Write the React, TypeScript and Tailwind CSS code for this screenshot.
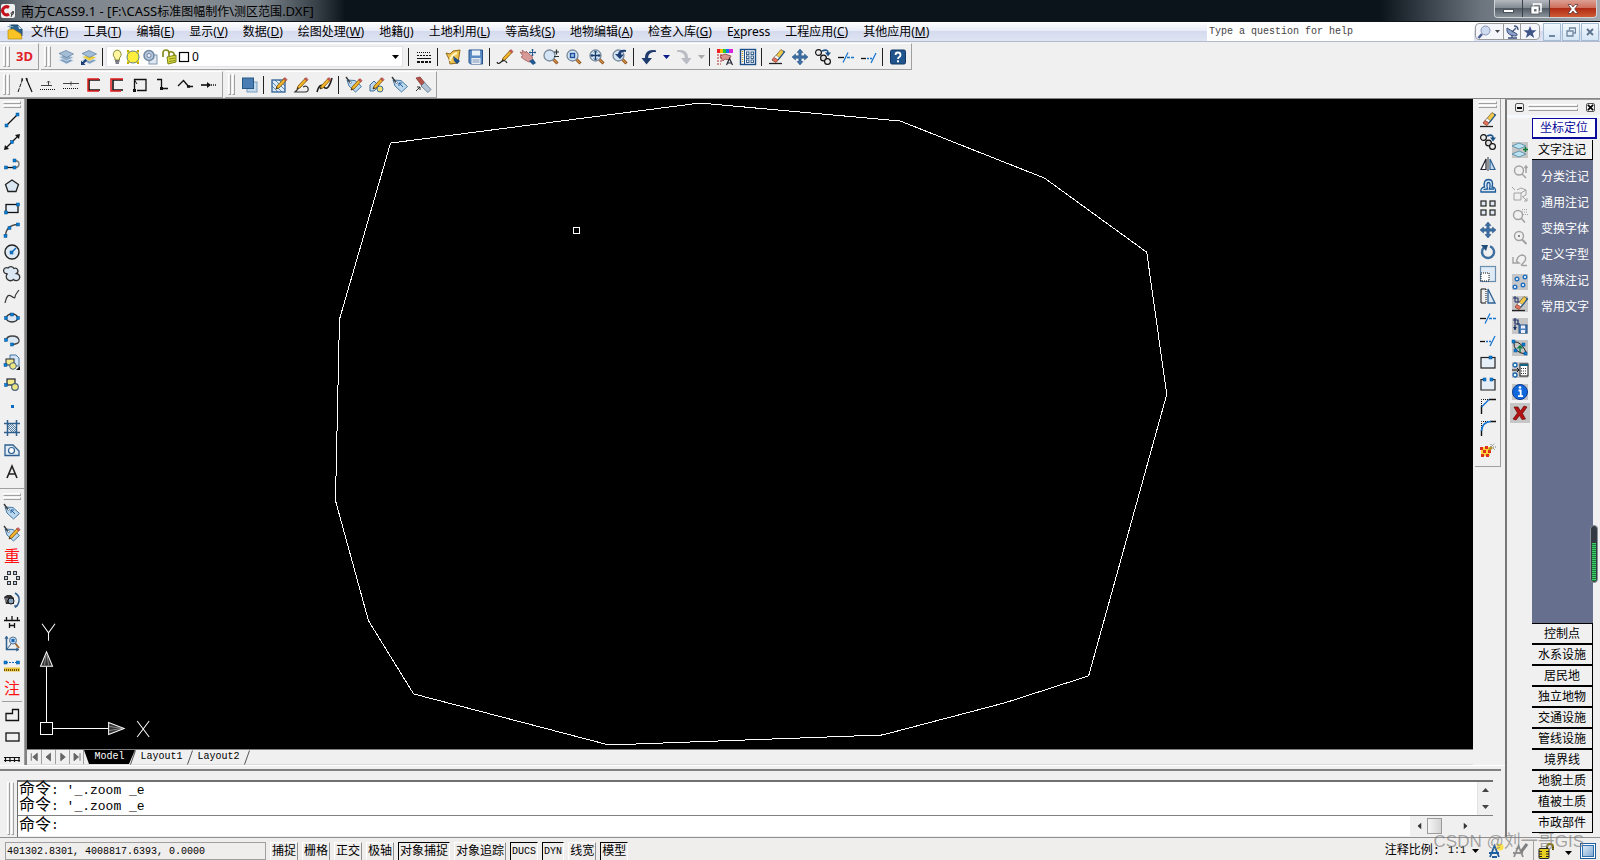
import React, { type ReactNode } from 'react';

const Dot = ({ x, y }: { x: number; y: number }) => (
  <rect x={x} y={y} width="3" height="3" fill="#0a7fd8" stroke="#06508c" strokeWidth="0.5" />
);

const K = '#111';
const N = '#2f5f8f';

const Pencil = ({ dx = 0, dy = 0 }: { dx?: number; dy?: number }) => (
  <g transform={`translate(${dx} ${dy})`}>
    <path d="M4 12 5 9 12 1.5 14 3.5 7 11z" fill="#f3b62a" stroke="#7a4d06" strokeWidth="0.8" />
    <path d="M11.5 2 13 .5 15 2.5 13.6 4z" fill="#cf5a5a" stroke="#8d2f2f" strokeWidth="0.5" />
    <path d="M4 12 4.700 10 6 11.200z" fill="#222" />
  </g>
);

const Lens = ({ children }: { children?: ReactNode }) => (
  <>
    <path d="M10 10 14.500 14.500" stroke="#8a4a17" strokeWidth="3" />
    <path d="M10 10 14 14" stroke="#d99445" strokeWidth="1.200" />
    <circle cx="6.500" cy="6.500" r="5.500" fill="#d5e4f4" stroke="#76889a" strokeWidth="1.300" />
    {children}
  </>
);

const Tag = () => (
  <>
    <path d="M1 3 9 3.500 15.500 9.500 9.500 15 3 9z" fill="#bcd8ef" stroke="#4a7aa3" />
    <path d="M0 0 4 5.500" stroke="#333" strokeWidth="1.300" />
    <circle cx="4.500" cy="5.500" r="1" fill="#fff" stroke="#456" strokeWidth="0.6" />
  </>
);

const Eraser = () => (
  <>
    <path d="M0 14.500H13" stroke="#222" strokeWidth="1.300" />
    <path d="M3 11 12 0.500 15.500 3 7 13.500z" fill="#f2c84b" stroke="#6b5520" strokeWidth="0.700" />
    <path d="M5 8.500 7 6.200 10.700 8.800 9 11z" fill="#f7f7f7" stroke="#666" strokeWidth="0.500" />
    <path d="M3 11 5 8.500 9 11 7 13.500z" fill="#e8705c" stroke="#7c3a30" strokeWidth="0.500" />
    <path d="M14 2 15.500 3 9 11" stroke="#245a91" strokeWidth="1.200" fill="none" />
  </>
);

const Layers = ({ y = '#8fabc7' }: { y?: string }) => (
  <>
    <path d="M1 11 8 8.500 15.500 11.500 8.500 15z" fill="#7f9fbf" stroke="#dbe7f2" strokeWidth="0.700" />
    <path d="M1 8 8 5.500 15.500 8.500 8.500 12z" fill={y} stroke="#dbe7f2" strokeWidth="0.700" />
    <path d="M1 4.500 8 1.500 15.500 5 8.500 8.500z" fill="#a3bdd6" stroke="#5f7f9f" strokeWidth="0.700" />
  </>
);

const Move = () => (
  <path d="M8 0 11 3.500H9.200V6.800H12.500V5L16 8 12.500 11V9.200H9.200V12.500H11L8 16 5 12.500H6.800V9.200H3.500V11L0 8 3.500 5V6.800H6.800V3.500H5z" fill="#3b6fa5" stroke="#1f4a78" strokeWidth="0.500" />
);

const Copy = () => (
  <>
    <circle cx="3.500" cy="3.500" r="2.900" fill="#eee" stroke={K} strokeWidth="1.200" />
    <circle cx="8.500" cy="9" r="2.900" fill="#ddd" stroke={K} strokeWidth="1.200" />
    <circle cx="12.500" cy="12.500" r="2.900" fill="#eee" stroke={K} strokeWidth="1.200" />
    <path d="M7 2Q13 -.5 13 4" fill="none" stroke="#1d5288" strokeWidth="1.800" />
    <path d="M10 3.500H16L13 7.500z" fill="#1d5288" />
  </>
);

const TrimA = () => (
  <>
    <path d="M0 8.500H6" stroke={K} strokeWidth="1.300" />
    <path d="M5 13.500 10 3.500" stroke="#1675cf" strokeWidth="1.300" />
    <path d="M9 8.500H16" stroke="#1675cf" strokeWidth="1.300" strokeDasharray="3 1" />
  </>
);
const TrimB = () => (
  <>
    <path d="M0 9.500H5" stroke={K} strokeWidth="1.300" />
    <path d="M6 9.500H11" stroke="#1675cf" strokeWidth="1.300" strokeDasharray="2 1" />
    <path d="M10 14 15 4" stroke="#1675cf" strokeWidth="1.300" />
  </>
);

const Undo = ({ c }: { c: string }) => (
  <path d="M15 1.500C8 0 4 3 4 9H0.500L5.500 15.500 11 9H7.200C7 5 10 2.500 15 3z" fill={c} />
);

const Square = ({ x, y }: { x: number; y: number }) => (
  <rect x={x} y={y} width="3" height="3" fill="#b9cce0" stroke="#333" />
);

const icons: Record<string, ReactNode> = {
  layers: <Layers />,
  layersPrev: (<><Layers y="#efcd33" /><path d="M0 16V11.500L1.500 13 4.500 10 6 11.500 3 14.500 4.500 16z" fill="#1d3f78" /></>),
  lineweight: (<g stroke={K} shapeRendering="crispEdges"><path d="M1 3.500H15" strokeDasharray="1 1" /><path d="M1 6.500H15" strokeDasharray="2 1" /><path d="M1 9.500H15" /><path d="M1 13H15" strokeWidth="2" strokeDasharray="3 1" /></g>),
  plotEdit: (<><path d="M1 4 5 5 8 2 15 1 13 14 5 15 4 10z" fill="#f0c24c" stroke="#8f6a1b" /><path d="M5 12Q6 6 12 4" stroke="#fff3c4" strokeWidth="2" fill="none" /><path d="M8 7 15 12 12 15 9 12z" fill="#1f4f88" /></>),
  save: (<><path d="M1 1H14.500V15H2.500L1 13.500z" fill="#5d8cc4" stroke="#27508a" /><rect x="4" y="1.500" width="8" height="5" fill="#e9f1f9" /><rect x="3.500" y="9" width="9" height="6" fill="#e9eef4" /><path d="M4.500 11H11.500M4.500 13H11.500" stroke="#7a96b5" /></>),
  match: (<><Pencil dx={1} /><path d="M0 13Q1 16 4 13Q8 10 10 14" fill="none" stroke="#222" strokeWidth="1.200" /></>),
  pan: (<><path d="M0 3 3 4 2 1 6 4 6 2 10 6 12 7 13 12 9 13 5 11 1 8 3 7z" fill="#d89a96" stroke="#a45f60" strokeWidth="0.800" /><path d="M9 12 13 10 16 14 13 16z" fill="#21588f" /><path d="M12.500 0V7M9 3.500H16" stroke="#265a8d" /><path d="M11.500 1H13.500M11.500 6H13.500M10 2.500V4.500M15 2.500V4.500" stroke="#265a8d" /></>),
  zoomRt: (<><Lens /><path d="M11 3H16M13.500 .5V5.500M11 7.500H16" stroke="#233" strokeWidth="1.200" /></>),
  zoomWin: (<Lens><rect x="4.500" y="4.500" width="4" height="4" fill="#a8c8ea" stroke="#1c4f9c" strokeWidth="1.400" /></Lens>),
  zoomExt: (<Lens><path d="M6.500 2V11M2 6.500H11" stroke="#173e6b" strokeWidth="1.300" /><path d="M5 3.500 6.500 2 8 3.500M5 9.500 6.500 11 8 9.500M3.500 5 2 6.500 3.500 8M9.500 5 11 6.500 9.500 8" fill="none" stroke="#173e6b" /></Lens>),
  zoomPrev: (<Lens><path d="M14 1C9 0 6.500 2 6 5H3L8 10 12 5.500H9C9 3 11 2.500 14 3z" fill="#1b3f74" /></Lens>),
  undo: <Undo c="#1e3c6e" />,
  redo: <g transform="translate(16 0) scale(-1 1)"><Undo c="#b9bcc2" /></g>,
  props: (<><rect width="3" height="4" fill="#e22" /><rect x="3" width="3" height="4" fill="#fb0" /><rect x="6" width="3" height="4" fill="#2c3" /><rect x="9" width="3" height="4" fill="#17e" /><rect x="12" width="4" height="4" fill="#d2d" /><path d="M3 7 8 5 14 7 12 11 8 10 6 12z" fill="#dc958e" stroke="#8e4444" strokeWidth="0.800" /><path d="M0 6H5M0 9H5M0 12H5M0 15H4" stroke="#b0302b" strokeDasharray="2 1" /><path d="M9.500 16 12.500 9.500 15.500 16M10.500 14H14.500" fill="none" stroke="#223" strokeWidth="1.200" /></>),
  design: (<><rect x=".5" y=".5" width="15" height="15" fill="#f5f8fc" stroke="#1b4d87" strokeWidth="1.400" /><path d="M4.500 1V15" stroke="#1b4d87" /><path d="M2.500 2V14" stroke="#c7951e" strokeDasharray="1 1" strokeWidth="1.500" /><g fill="#fff" stroke="#234f80" strokeWidth="0.900"><rect x="6.500" y="3" width="2.500" height="2.500" /><rect x="11" y="3" width="2.500" height="2.500" /><rect x="6.500" y="7" width="2.500" height="2.500" /><rect x="11" y="7" width="2.500" height="2.500" /><rect x="6.500" y="11" width="2.500" height="2.500" /><rect x="11" y="11" width="2.500" height="2.500" /></g></>),
  eraser: <Eraser />,
  move: <Move />,
  copy: <Copy />,
  trimA: <TrimA />,
  trimB: <TrimB />,
  help: (<><rect x=".5" y="1" width="15" height="14" rx="1.500" fill="#1f548c" stroke="#123762" /><path d="M5.500 6Q5.500 3.500 8 3.500T10.500 6Q10.500 7.300 9 8.200 8 8.800 8 10" fill="none" stroke="#fff" strokeWidth="1.800" /><rect x="7" y="11.300" width="2" height="2" fill="#fff" /></>),
  peak: (<><path d="M1 15 6 1" stroke={K} strokeDasharray="4 1" /><path d="M9 1 15 15" stroke={K} strokeWidth="1.200" /><path d="M5 1V4M10 1V4" stroke={K} /></>),
  road1: (<><path d="M1 8.500H12M8.500 4V8" stroke="#444" /><path d="M7 5.500 8.500 4 10 5.500" fill="none" stroke="#444" /><path d="M0 12.500H16" stroke={K} strokeDasharray="1 1" /></>),
  road2: (<><path d="M0 6.500H16M8 4.500V8.500" stroke="#444" /><path d="M0 11.500H16" stroke={K} strokeDasharray="1 1" /></>),
  boxA: (<><path d="M14 3H3V13H14" fill="none" stroke={K} strokeWidth="1.600" /><path d="M13 2H2V14H13" fill="none" stroke="#e01818" strokeWidth="1.400" /></>),
  boxB: (<><path d="M14 3H4V13H14" fill="none" stroke={K} strokeWidth="1.600" /><path d="M14 2H2V14H12" fill="none" stroke="#e01818" strokeWidth="1.500" /></>),
  boxC: (<><path d="M2.500 14V2.500H14V13.500H5" fill="none" stroke={K} strokeWidth="1.300" /><path d="M2.500 3 5 7" stroke={K} /><rect x="1" y="12" width="3" height="3" fill={K} /></>),
  elbow: (<><path d="M2 2.500H6.500V11.500H13" fill="none" stroke={K} strokeWidth="1.300" /><rect x="5" y="10" width="3" height="3" fill={K} /></>),
  zig: (<><path d="M0 9 5.500 3.500 10.500 9.500H15" fill="none" stroke={K} strokeWidth="1.300" /><path d="M9 9.500H12" stroke={K} strokeWidth="2.500" /></>),
  dotArrow: (<><path d="M0 8H9" stroke={K} strokeWidth="1.600" /><path d="M6 5 10 8 6 11z" fill={K} /><path d="M10 8H16" stroke={K} strokeWidth="1.600" strokeDasharray="1 1" /></>),
  stack: (<><rect x="5" y="5" width="10" height="10" fill="#c3d9ee" stroke="#7c9cbc" /><rect x=".5" y="1" width="11" height="10.500" fill="#4a7db3" stroke="#275784" /></>),
  hatchEdit: (<><rect x="1" y="3" width="13" height="12" fill="#dcebf8" stroke="#2b5f93" strokeWidth="1.300" /><path d="M1 9 7 15M1 5 11 15M4 3 14 13M8 3 14 9" stroke="#2b5f93" strokeWidth="0.700" /><Pencil dx={1} /></>),
  plineEdit: (<><path d="M4 12 1 15H11Q15 15 14 11 13 8 9 10" fill="none" stroke="#333" strokeWidth="1.200" /><Pencil dx={-1} /></>),
  splineEdit: (<><path d="M0 15Q3 5 7 10T15 1" fill="none" stroke="#222" strokeWidth="1.600" /><Pencil dx={-1} /></>),
  tagEdit: (<><Tag /><Pencil dx={1} dy={1} /></>),
  blockEdit: (<><path d="M1 8 5 4 10 9 5 14H1z" fill="#bcd8ef" stroke="#3d6c99" /><circle cx="11" cy="12" r="3" fill="#f1df6c" stroke="#3d6c99" /><Pencil dx={0} /></>),
  tag: (<><Tag /><path d="M7 6 11 10M7 9V6H10" stroke="#235e9c" fill="none" /></>),
  brush: (<><path d="M1 1 5 0 10 6 7 9z" fill="#b6514a" stroke="#7c2e2a" strokeWidth="0.700" /><path d="M6 9 9.500 5.500 16 12.500 13 15.500z" fill="#b4c4d4" stroke="#54718f" strokeWidth="0.800" /><path d="M1 14 5 10M5 13V10H2" stroke="#333" fill="none" /></>),
  line: (<><path d="M2.500 13.500 13.500 2.500" stroke={K} strokeWidth="1.300" /><Dot x={1} y={12} /><Dot x={12} y={1} /></>),
  xline: (<><path d="M2 14 14 2" stroke={K} strokeWidth="1.300" /><path d="M0 16 1 11 5 15zM16 0 11 1 15 5z" fill={K} /><Dot x={6.500} y={6.500} /></>),
  pline: (<><path d="M2 11.500H11" stroke={K} strokeWidth="1.300" /><path d="M10 4.500Q15 4.500 15 8T11 11.500" fill="none" stroke="#777" strokeWidth="1.400" /><Dot x={0.500} y={10} /><Dot x={9} y={3} /><Dot x={9} y={10} /></>),
  polygon: <path d="M8 2 14.500 6.500 12 13.500H4L1.500 6.500z" fill="#dbe7f3" stroke="#222" strokeWidth="1.300" />,
  rect: (<><rect x="2" y="4.500" width="12" height="8" fill="#e6eef7" stroke={K} strokeWidth="1.300" /><Dot x={0.500} y={11} /><Dot x={12.500} y={3} /></>),
  arc: (<><path d="M1.500 14Q2 3 14 2.500" fill="none" stroke="#444" strokeWidth="1.300" /><Dot x={0} y={12.500} /><Dot x={4} y={4.500} /><Dot x={12.500} y={1} /></>),
  circle: (<><circle cx="8" cy="8" r="7" fill="#dde9f5" stroke="#222" strokeWidth="1.400" /><path d="M7.500 8.500 12 4" stroke="#0a6bc0" strokeWidth="1.500" /><Dot x={6} y={7} /></>),
  cloud: (<path d="M3.500 7.500A3 3 0 1 1 4 2 3.500 3.500 0 0 1 10 2.500 2.800 2.800 0 0 1 12.500 7.500 3.600 3.600 0 1 1 9.500 13.500 3.300 3.300 0 1 1 3.500 7.500z" fill="#dbe7f3" stroke="#333" strokeWidth="1.300" />),
  spline: <path d="M1 15Q3 5 7 8T11 9 15 2" fill="none" stroke="#333" strokeWidth="1.200" />,
  ellipse: (<><ellipse cx="8" cy="8" rx="6" ry="4" fill="#dbe7f3" stroke="#333" strokeWidth="1.300" /><Dot x={0.500} y={6.500} /><Dot x={12.500} y={6.500} /><Dot x={6.500} y={3} /></>),
  ellipseArc: (<><path d="M2 8Q3 4 8.500 4T15 8 8 12.500" fill="#dbe7f3" stroke="#444" strokeWidth="1.300" /><Dot x={0.500} y={6.500} /><Dot x={6.500} y={11} /></>),
  insert: (<><path d="M6 1H12L15 4V12H6z" fill="#d3e4f4" stroke="#44739f" /><rect x="2" y="5" width="8" height="6" fill="#f3ea88" stroke="#223" /><circle cx="9" cy="12" r="3.300" fill="#efe67f" stroke="#44617f" /><Dot x={0} y={9.500} /><path d="M16 12V16H12z" fill={K} /></>),
  makeBlock: (<><rect x="3" y="3" width="8" height="6" fill="#f3ea88" stroke="#223" strokeWidth="1.200" /><circle cx="11" cy="11" r="3.300" fill="#efe67f" stroke="#44617f" strokeWidth="1.200" /><Dot x={0.500} y={7.500} /></>),
  point: <rect x="7" y="7" width="3" height="3" fill="#0a6bc0" />,
  hatch: (<><path d="M3.500 0V16M12.500 0V16M0 3.500H16M0 12.500H16" stroke={N} strokeWidth="1.500" /><path d="M4 8 8 12M4 4 12 12M8 4 12 8M4 6 10 12M6 4 12 10" stroke={N} strokeWidth="0.800" /></>),
  region: (<><path d="M1 3H9L15 9V13.500H1z" fill="#e3edf7" stroke={N} strokeWidth="1.300" /><circle cx="7.500" cy="8.500" r="3" fill="#fff" stroke={N} strokeWidth="1.200" /></>),
  textA: (<path d="M3 14 8 2 13 14M5 10H11" fill="none" stroke="#222" strokeWidth="1.600" />),
  arrayDots: (<><Square x={3.500} y={1.500} /><Square x={9.500} y={1.500} /><Square x={.5} y={6.500} /><Square x={12.500} y={6.500} /><Square x={3.500} y={11.500} /><Square x={9.500} y={11.500} /></>),
  camera: (<><path d="M0 5 3 3 7 3 10 6V12L2 12z" fill="#333" /><path d="M1 7H4M1 9H3" stroke="#aab" /><circle cx="7" cy="9" r="3" fill="#8da3bb" stroke="#111" /><path d="M11 1Q16 4 15 9T11 15" fill="none" stroke={N} strokeWidth="1.500" /><path d="M10 13 14 14 11 16z" fill={N} /></>),
  fence: (<path d="M0 6.500H16M2.500 3V6M8 2V6M13.500 3V6M5.500 9V14M10.500 9V14M5.500 11.500H10.500" stroke={K} strokeWidth="1.300" />),
  axisZoom: (<><path d="M2.500 1V13.500H14" stroke={N} strokeWidth="1.500" fill="none" /><path d="M1 3 2.500 0 4 3M12 12 15 13.500 12 15M3 13 7 8" stroke={N} fill="none" /><path d="M11 7 15 12" stroke="#a36a34" strokeWidth="2" /><circle cx="9" cy="4.500" r="3.500" fill="#b9d7f3" stroke="#54728f" /><rect x="7.500" y="3" width="3" height="3" fill="#1767b4" /></>),
  ruler: (<><path d="M2 4.500H14" stroke="#0a6bc0" strokeDasharray="2 1" /><Dot x={0} y={3} /><Dot x={12.500} y={3} /><rect y="9.500" width="16" height="4" fill="#eac53b" /><path d="M0 12H16" stroke="#6a4d00" strokeWidth="2" strokeDasharray="1 1" /></>),
  stepBox: <path d="M2 6.500H8.500V2.500H14.500V13.500H2z" fill="none" stroke={K} strokeWidth="1.300" />,
  plainBox: <rect x="2" y="4" width="13" height="8" fill="none" stroke={K} strokeWidth="1.300" />,
  bench: <path d="M0 6.500H16M0 9.500H16M1.500 6V11M6 6V11M10.500 6V11M15 6V11" stroke={K} strokeWidth="1.200" />,
  mirror: (<><path d="M6 3V13.500H1z" fill="#fff" stroke="#223" strokeWidth="1.200" /><path d="M10 3V13.500H15z" fill="#c8daec" stroke="#2b5f93" strokeWidth="1.200" /><path d="M8 1V15" stroke="#333" /></>),
  offset: (<><path d="M1 14Q0 10 4.500 9 3 1.500 8.500 1.500T12 9Q16 9 15.500 14z" fill="#dbe7f3" stroke="#1d5b98" strokeWidth="1.300" /><path d="M4 12Q4 11 7.500 11 6 4.500 8.500 4.500T9.500 11H14" fill="none" stroke="#1d5b98" strokeWidth="1.300" /></>),
  array: (<g fill="#dbe7f3" stroke="#222" strokeWidth="1.200"><rect x="1" y="1" width="5" height="5" /><rect x="10" y="1" width="5" height="5" /><rect x="1" y="10" width="5" height="5" /><rect x="10" y="10" width="5" height="5" /></g>),
  rotate: (<><path d="M4 3.500A6 6 0 1 0 10 2.300" fill="none" stroke="#3f6f9f" strokeWidth="2.400" /><path d="M1 1 8 1 6 7z" fill="#244f7c" /></>),
  scale: (<><rect x=".5" y=".5" width="15" height="15" fill="#dfeaf5" stroke="#6a8cad" strokeWidth="1.200" /><rect x="1" y="7" width="8" height="8" fill="#fff" stroke={K} strokeDasharray="1 1" /></>),
  stretch: (<><path d="M6 1H1V15H6" fill="none" stroke={K} /><path d="M6 1V15" stroke={K} strokeDasharray="1 1" /><path d="M8 1V15H15z" fill="#dbe7f3" stroke="#2b5f93" strokeWidth="1.300" /></>),
  breakA: (<><rect x="1" y="3.500" width="14" height="10.500" fill="#e6eef7" stroke="#222" strokeWidth="1.200" /><Dot x={9} y={2} /></>),
  breakB: (<><path d="M4 3.500H1V14H15V3.500H12" fill="#e6eef7" stroke="#222" strokeWidth="1.200" /><Dot x={3} y={2} /><Dot x={10} y={2} /></>),
  chamfer: (<><path d="M1.500 16V8M9 1.500H16" stroke={K} strokeWidth="1.400" /><path d="M1.500 8V1.500H9" stroke={K} strokeDasharray="1 1" fill="none" /><path d="M1.500 9 9 1.500" stroke="#1675cf" strokeWidth="1.500" /></>),
  fillet: (<><path d="M1.500 16V10M10 1.500H16" stroke={K} strokeWidth="1.400" /><path d="M1.500 8V1.500H9" stroke={K} strokeDasharray="1 1" fill="none" /><path d="M1.500 11Q2 2 11 1.500" stroke="#1675cf" strokeWidth="1.700" fill="none" /></>),
  explode: (<><rect x="1" y="5" width="9" height="9" fill="#ffd33c" /><g fill="#e0301c"><rect x="0" y="5" width="3" height="3" /><rect x="5" y="4" width="3" height="3" /><rect x="8" y="8" width="3" height="3" /><rect x="3" y="8" width="3" height="3" /><rect x="1" y="12" width="3" height="3" /><rect x="6" y="12" width="3" height="3" /></g><path d="M9 8 12 5" stroke="#b98e22" strokeWidth="2.500" /><path d="M11 5V1M12 4 15 1M13 5H16M13 6 15 8" stroke="#777" strokeDasharray="1 1" /></>),
  sheets: (<><rect width="16" height="16" fill="#c6c6c6" /><path d="M0 4 7 1 14 4 7 7zM0 12 7 9 14 12 7 15z" fill="#b9e2f2" stroke="#5d8ea6" strokeWidth="0.900" /><path d="M13.500 5V10M11 7.500H16" stroke="#0c7a3b" strokeWidth="1.500" /></>),
  gZoomUp: (<><circle cx="7" cy="6.500" r="4.500" fill="none" stroke="#a2a2a2" strokeWidth="1.400" /><path d="M10 10 14 14M14 2V9M12.500 4 14 2 15.500 4" stroke="#a2a2a2" strokeWidth="1.500" fill="none" /></>),
  gShapes: (<g fill="none" stroke="#a2a2a2"><path d="M5 4 9 2 14 4V9L10 11" /><path d="M2 7H9V14H2zM9 7 14 4M0 1 3 4M11 11 15 15M15 12V15H12" /></g>),
  gZoomGrid: (<><circle cx="6" cy="7" r="4.500" fill="none" stroke="#a2a2a2" strokeWidth="1.400" /><path d="M9 10 13 14.500" stroke="#a2a2a2" strokeWidth="1.600" /><path d="M10 1.500H16M10 4H16M11 6.500H16" stroke="#a2a2a2" strokeDasharray="1 1" /></>),
  gZoomDot: (<><circle cx="7" cy="6" r="4.500" fill="none" stroke="#a2a2a2" strokeWidth="1.400" /><path d="M10 9.500 14.500 14" stroke="#a2a2a2" strokeWidth="2" /><rect x="6" y="5" width="2" height="2" fill="#888" /></>),
  gBack: (<path d="M1 5V11H7L4.500 9Q6 3 10.500 3 15 4 13 9L9 13.500M10 13.500H15" fill="none" stroke="#a2a2a2" strokeWidth="1.400" />),
  nodes: (<><rect width="16" height="16" fill="#c6c6c6" /><g fill="#fff" stroke="#1f6fc0" strokeWidth="1.400"><circle cx="5" cy="5" r="1.800" /><circle cx="13" cy="3" r="1.800" /><circle cx="3" cy="13" r="1.800" /><circle cx="11" cy="11" r="1.800" /></g></>),
  cropErase: (<><rect width="16" height="16" fill="#c6c6c6" /><path d="M3 0V6H8M1 2H6V7" fill="none" stroke="#1b2f66" /><Eraser /></>),
  cropSave: (<><rect width="16" height="16" fill="#c6c6c6" /><path d="M3 0V6H8M1 2H6V7M3 7V12" fill="none" stroke="#1b2f66" strokeWidth="1.200" /><path d="M1 9 3 12 5 9z" fill="#1b2f66" /><rect x="7" y="7" width="8" height="8" fill="#4a80bd" stroke="#1f4d82" /><rect x="9" y="7.500" width="4" height="3" fill="#eef" /><rect x="9" y="12" width="4" height="3" fill="#eef" /></>),
  curve: (<><rect width="16" height="16" fill="#c6c6c6" /><path d="M2 2Q1 12 13 14M2 2Q9 1 14 12" fill="none" stroke="#222" /><path d="M8 12V6M5.500 8.500 8 6 10.500 8.500" stroke="#0b7b45" strokeWidth="1.400" fill="none" /><Dot x={0} y={0} /><Dot x={12} y={12} /><Dot x={2} y={9} /><Dot x={10} y={3} /></>),
  list: (<><rect width="16" height="16" fill="#c6c6c6" /><rect x="8" y="2" width="8" height="12" fill="#fff" stroke={K} /><path d="M8 3H16" stroke="#168" strokeWidth="2" /><path d="M9 6.500H15M9 9H15M9 11.500H15" stroke="#333" strokeDasharray="1 1" /><g fill="#dff" stroke="#1a62ae" strokeWidth="1.300"><circle cx="3" cy="3" r="2" /><circle cx="3" cy="13" r="2" /></g><path d="M0 8H7M5 6 7 8 5 10" stroke={K} fill="none" /></>),
  info: (<><rect width="16" height="16" fill="#c6c6c6" /><circle cx="8" cy="8" r="7.500" fill="#1168dc" stroke="#0a3a94" /><path d="M6.500 6.500H8.700V12M6 12.200H11" stroke="#fff" strokeWidth="1.800" fill="none" /><circle cx="8" cy="3.500" r="1.300" fill="#fff" /></>),
  cross: (<path d="M2 2 6 2 8.500 6 12 1 15 2 10.500 8.500 13.500 14 10 14.500 7.500 10.500 4 15 1 14 5.500 8z" fill="#b31212" stroke="#6d0808" strokeWidth="0.700" />),
};

const Icon = ({ name }: { name: string }) => (
  <svg viewBox="0 0 16 16" className="h-4 w-4 shrink-0 overflow-visible" aria-hidden="true">{icons[name]}</svg>
);

const Tool = ({ name, label }: { name: string; label: string }) => (
  <button type="button" aria-label={label} className="flex h-[22px] w-[23px] shrink-0 items-center justify-center">
    <Icon name={name} />
  </button>
);

const Group = ({ items }: { items: string[] }) => (
  <>{items.map((n, i) => <Tool key={i} name={n} label={n} />)}</>
);

const VSep = () => <span className="mr-[3px] ml-0.5 h-[18px] w-px shrink-0 bg-[#222]" />;

const gripBar = 'border-t border-l border-r border-b border-t-white border-l-white border-r-[#a0a0a0] border-b-[#a0a0a0]';

const VGrip = () => (
  <span className="mx-[3px] flex shrink-0 gap-px self-stretch py-0.5">
    <i className={`w-[3px] ${gripBar}`} />
    <i className={`w-[3px] ${gripBar}`} />
  </span>
);

const HGrip = () => (
  <span className="flex h-2.5 shrink-0 flex-col gap-px self-stretch px-[3px] pt-0.5">
    <i className={`h-[3px] ${gripBar}`} />
    <i className={`h-[3px] ${gripBar}`} />
  </span>
);

const Bar = ({ children }: { children: ReactNode }) => (
  <div role="toolbar" className="mr-0.5 flex h-[27px] items-center border-t border-r border-b border-t-white border-r-[#a0a0a0] border-b-[#a0a0a0] pr-0.5">
    {children}
  </div>
);

const Caret = ({ c }: { c: string }) => (
  <svg viewBox="0 0 7 4" className="h-1 w-[7px]"><path d="M0 0H7L3.500 4z" fill={c} /></svg>
);

const menus: [string, string][] = [
  ['文件', 'F'], ['工具', 'T'], ['编辑', 'E'], ['显示', 'V'], ['数据', 'D'], ['绘图处理', 'W'], ['地籍', 'J'],
  ['土地利用', 'L'], ['等高线', 'S'], ['地物编辑', 'A'], ['检查入库', 'G'], ['Express', ''], ['工程应用', 'C'], ['其他应用', 'M'],
];

const drawTools = ['line', 'xline', 'pline', 'polygon', 'rect', 'arc', 'circle', 'cloud', 'spline', 'ellipse', 'ellipseArc', 'insert', 'makeBlock', 'point', 'hatch', 'region', 'textA'];
const modifyTools = ['eraser', 'copy', 'mirror', 'offset', 'array', 'move', 'rotate', 'scale', 'stretch', 'trimA', 'trimB', 'breakA', 'breakB', 'chamfer', 'fillet', 'explode'];
const dockTools = ['sheets', 'gZoomUp', 'gShapes', 'gZoomGrid', 'gZoomDot', 'gBack', 'nodes', 'cropErase', 'cropSave', 'curve', 'list', 'info'];
const notes = ['分类注记', '通用注记', '变换字体', '定义字型', '特殊注记', '常用文字'];
const categories = ['控制点', '水系设施', '居民地', '独立地物', '交通设施', '管线设施', '境界线', '地貌土质', '植被土质', '市政部件'];
const toggles: [string, boolean][] = [
  ['捕捉', false], ['栅格', false], ['正交', false], ['极轴', false], ['对象捕捉', true], ['对象追踪', false],
  ['DUCS', true], ['DYN', true], ['线宽', false], ['模型', true],
];

function TitleBar() {
  return (
    <header className="flex h-[22px] shrink-0 justify-between border-b border-[#10151c] bg-[linear-gradient(90deg,#4d555d_0,#7b8289_40px,#878d93_150px,#7d858c_260px,#3a424a_315px,#0b131b_345px,#0b131b_1380px,#6b747d_1480px,#a3abb2_100%)] bg-[#0b131b]">
      <div className="flex items-center gap-[5px]">
        <svg viewBox="0 0 16 16" className="h-4 w-4" aria-hidden="true">
          <rect x="1" y="1" width="14" height="14" rx="2" fill="#efefef" />
          <path d="M9 4.500A4 4 0 1 0 9 11" fill="none" stroke="#c3121b" strokeWidth="3" />
          <path d="M13.500 9A1.500 1.500 0 1 0 12 12Q13.500 12 13.500 9T11 14" fill="none" stroke="#444" />
        </svg>
        <h1 className="text-[13px] leading-5 whitespace-nowrap text-black">南方CASS9.1 - [F:\CASS<span className="text-xs">标准图幅制作</span>\<span className="text-xs">测区范围</span>.DXF]</h1>
      </div>
      <div className="mr-[3px] flex h-[18px] overflow-hidden rounded-b border border-t-0 border-[#cfd4d9]">
        <button type="button" aria-label="最小化" className="flex w-7 items-end justify-center border-r border-[#3b4148] bg-[linear-gradient(#b5bac0,#7d858d_50%,#535b64_50%,#8a929a)] pb-1">
          <span className="h-1 w-[11px] border border-[#4b5158] bg-white" />
        </button>
        <button type="button" aria-label="还原" className="flex w-[27px] items-center justify-center border-r border-[#3b4148] bg-[linear-gradient(#b5bac0,#7d858d_50%,#535b64_50%,#8a929a)]">
          <svg viewBox="0 0 12 12" className="h-3 w-3"><path d="M3.500 1H11V8.500H3.500z" fill="none" stroke="#fff" strokeWidth="1.500" /><rect x="1" y="3" width="8" height="8" fill="#fff" stroke="#4b5158" strokeWidth="0.700" /><rect x="4" y="6" width="2.500" height="2.500" fill="#6b737b" /></svg>
        </button>
        <button type="button" aria-label="关闭" className="flex w-[46px] items-center justify-center bg-[linear-gradient(#dca094,#cd6a57_50%,#b02c14_50%,#cf5a35)]">
          <svg viewBox="0 0 12 10" className="h-2.5 w-3"><path d="M1 .5H4L6 3 8 .5H11L7.700 5 11 9.500H8L6 7 4 9.500H1L4.300 5z" fill="#fff" stroke="#5b3a3a" strokeWidth="0.800" /></svg>
        </button>
      </div>
    </header>
  );
}

const mdiBtn = 'flex h-[18px] w-[18px] items-center justify-center border border-[#a4bcd4] bg-[linear-gradient(#f2f8fd,#d6e6f5)]';

function MenuBar() {
  return (
    <nav className="flex h-5 shrink-0 items-center gap-px border-b border-[#b3bad0] bg-[linear-gradient(#fff,#e9ecf7_45%,#d5dbee_50%,#dfe4f3)]">
      <svg viewBox="0 0 16 16" className="ml-[7px] h-4 w-4" aria-hidden="true">
        <path d="M4 1H11L15 5V12H4z" fill="#2d628f" stroke="#1f4669" /><path d="M1 6 6 5 14 10 15 15H1z" fill="#f7c325" stroke="#b48a12" strokeWidth="0.700" /><path d="M3 0V5M.5 2.500H6" stroke="#8ab" /><path d="M11 1 12 5H15" fill="#cfe0ee" />
      </svg>
      {menus.map(([t, k]) => (
        <button key={t} type="button" className="px-[7px] pt-px text-xs leading-[18px] whitespace-nowrap text-black">
          {k ? <>{t}(<u>{k}</u>)</> : <>E<u>x</u>press</>}
        </button>
      ))}
      <input aria-label="help" placeholder="Type a question for help" className="ml-auto h-[18px] w-[267px] bg-white px-0.5 font-['Liberation_Mono','Noto_Sans_CJK_SC',monospace] text-[10px] placeholder:text-[#444] placeholder:opacity-100" />
      <div className="mr-0.5 flex h-[17px] rounded border border-[#9a9a9a] bg-[#f4f6fb]">
        <button type="button" aria-label="搜索" className="flex w-7 items-center gap-1 border-r border-[#9a9a9a] pl-px">
          <svg viewBox="0 0 14 14" className="h-3.5 w-3.5"><path d="M1.500 13 5 9" stroke="#4a5f92" strokeWidth="2.600" /><circle cx="8.500" cy="5.500" r="4.500" fill="#cddaf0" stroke="#8795b4" /></svg>
          <svg viewBox="0 0 7 4" className="h-[3px] w-[5px]"><path d="M0 0H7L3.500 4z" fill="#444" /></svg>
        </button>
        <button type="button" aria-label="通讯中心" className="flex w-[17px] items-center justify-center border-r border-[#9a9a9a]">
          <svg viewBox="0 0 14 14" className="h-3.5 w-3.5"><path d="M2 3Q1 9 7 10.500T12 9z" fill="#8aa0c8" stroke="#3c517f" /><path d="M7 7 11 3M9 1Q13 1 13 5M7 10V13M3 13H12" fill="none" stroke="#3c517f" strokeWidth="1.300" /></svg>
        </button>
        <button type="button" aria-label="收藏夹" className="flex w-[18px] items-center justify-center">
          <svg viewBox="0 0 14 14" className="h-3.5 w-3.5"><path d="M7 1 8.700 5.300H13.500L9.800 8.200 11.200 13 7 10 2.800 13 4.200 8.200.5 5.300H5.300z" fill="#3f5587" /></svg>
        </button>
      </div>
      <div className="mr-px flex gap-px">
        <button type="button" aria-label="最小化图形" className={mdiBtn}><span className="mt-2 h-0.5 w-1.5 bg-[#6f86a0]" /></button>
        <button type="button" aria-label="还原图形" className={mdiBtn}>
          <svg viewBox="0 0 10 10" className="h-2.5 w-2.5"><path d="M3.500 3V1H9.500V6H7.500" fill="none" stroke="#6f86a0" strokeWidth="1.300" /><path d="M1 4H7V9H1z" fill="none" stroke="#6f86a0" strokeWidth="1.300" /></svg>
        </button>
        <button type="button" aria-label="关闭图形" className={mdiBtn}>
          <svg viewBox="0 0 8 8" className="h-2 w-2"><path d="M1 1 7 7M7 1 1 7" stroke="#5f768f" strokeWidth="2" /></svg>
        </button>
      </div>
    </nav>
  );
}

function LayerBox() {
  return (
    <div className="mr-[3px] flex h-[21px] w-[297px] items-center border border-[#e2e3ea] bg-white pr-[3px] pl-[3px]">
      <svg viewBox="0 0 82 16" className="h-4 w-[82px] shrink-0" aria-hidden="true">
        <path d="M7 1A4.500 4.500 0 0 1 9.500 9V11H5V9A4.500 4.500 0 0 1 7 1z" fill="#fff6a0" stroke="#8b8f3a" /><path d="M5 12H9.500M5.500 14H9" stroke="#556" strokeWidth="1.500" />
        <rect x="17" y="2" width="12" height="12" fill="#f6e62c" /><circle cx="23" cy="8" r="6" fill="#ffef3c" stroke="#5b7f93" /><path d="M17 2H19M27 2H29M17 14H19M27 14H29" stroke="#c7a800" strokeWidth="2" />
        <rect x="39" y="6" width="8" height="9" fill="#dfe8f2" stroke="#8196ac" /><circle cx="39" cy="6.500" r="5" fill="#b5c7da" stroke="#7189a3" strokeWidth="1.500" /><circle cx="39" cy="6.500" r="2" fill="#eef" stroke="#7189a3" />
        <path d="M53 8V4Q53 1 56 1T59 4V7M59 5Q59 2 62 3T64 8" fill="none" stroke="#878a1c" strokeWidth="1.700" /><path d="M57 8 66 6V13L58 15z" fill="#d9dc3c" stroke="#7d8018" /><path d="M59 10 65 9M59 12.500 65 11.500" stroke="#8a8d20" />
        <rect x="69.500" y="3.500" width="9" height="9" fill="#fff" stroke="#000" strokeWidth="1.200" />
      </svg>
      <select aria-label="图层" className="h-full flex-1 appearance-none bg-transparent text-xs text-black outline-none">
        <option>0</option>
      </select>
      <Caret c="#000" />
    </div>
  );
}

function Toolbars() {
  return (
    <div className="flex shrink-0 flex-col gap-px border-b border-[#858585] pt-px">
      <div className="flex">
        <Bar><VGrip /><button type="button" className="w-[23px] text-center text-[13px] font-bold text-[#e0202a]">3D</button></Bar>
        <Bar>
          <VGrip />
          <Group items={['layers', 'layersPrev']} />
          <VSep />
          <LayerBox />
          <VSep />
          <Group items={['lineweight']} />
          <VSep />
          <Group items={['plotEdit', 'save']} />
          <VSep />
          <Group items={['match', 'pan', 'zoomRt', 'zoomWin', 'zoomExt', 'zoomPrev']} />
          <VSep />
          <Group items={['undo']} />
          <button type="button" aria-label="放弃列表" className="flex w-3 justify-center"><Caret c="#0b1b8a" /></button>
          <Group items={['redo']} />
          <button type="button" aria-label="重做列表" className="flex w-3 justify-center"><Caret c="#aaa" /></button>
          <VSep />
          <Group items={['props', 'design']} />
          <VSep />
          <Group items={['eraser', 'move', 'copy', 'trimA', 'trimB']} />
          <VSep />
          <Group items={['help']} />
        </Bar>
      </div>
      <div className="flex">
        <Bar><VGrip /><Group items={['peak', 'road1', 'road2', 'boxA', 'boxB', 'boxC', 'elbow', 'zig', 'dotArrow']} /></Bar>
        <Bar>
          <VGrip />
          <Group items={['stack']} />
          <VSep />
          <Group items={['hatchEdit', 'plineEdit', 'splineEdit']} />
          <VSep />
          <Group items={['tagEdit', 'blockEdit', 'tag', 'brush']} />
        </Bar>
      </div>
    </div>
  );
}

function LeftTools() {
  return (
    <div className="flex w-[25px] shrink-0 flex-col items-center overflow-hidden border-r border-[#a0a0a0]">
      <HGrip />
      <Group items={drawTools} />
      <span className="mt-[5px] h-px w-full shrink-0 bg-[#a0a0a0]" />
      <span className="h-0.5 shrink-0" />
      <HGrip />
      <Group items={['tag', 'tagEdit']} />
      <button type="button" className="h-[22px] shrink-0 text-base leading-[22px] text-[#f11]">重</button>
      <Group items={['arrayDots', 'camera', 'fence', 'axisZoom', 'ruler']} />
      <button type="button" className="h-[22px] shrink-0 text-base leading-[22px] text-[#f11]">注</button>
      <span className="my-0.5 h-px w-5 shrink-0 bg-[#a0a0a0]" />
      <Group items={['stepBox', 'plainBox', 'bench']} />
    </div>
  );
}

function Drawing() {
  return (
    <div className="relative min-h-0 flex-1 bg-black">
      <svg viewBox="0 0 1446 649" preserveAspectRatio="xMinYMin slice" className="absolute inset-0 h-full w-full" shapeRendering="crispEdges" fill="none" stroke="#fff" role="img" aria-label="测区范围">
        <path d="M363 44 672 4 872 22 1016 79 1118 153 1138 295 1060 576 976 603 854 635 581 645 386 594 341 521 308 401 312 220z" />
        <rect x="545.500" y="128.500" width="6" height="6" />
        <rect x="13.500" y="622.500" width="12" height="12" />
        <path d="M19.500 622V567M26 628.500H81" />
        <g shapeRendering="auto">
          <path d="M13.500 566.500H25.500L19.500 552z" fill="#333" /><path d="M17.500 565 19 555M21.500 565 20 555" stroke="#aaa" strokeWidth="0.700" />
          <path d="M81.500 622.500V634.500L97 628.500z" fill="#333" /><path d="M82 626.500 95 628.500M82 630.500 95 628.500" stroke="#aaa" strokeWidth="0.700" />
          <path d="M15 524 21.500 533 28 524M21.500 533V541M110 621 122 637M122 621 110 637" />
        </g>
      </svg>
    </div>
  );
}

const Slash = () => (
  <svg viewBox="0 0 8 15" className="h-[15px] w-2 shrink-0" aria-hidden="true"><path d="M1.500 14.500 6.500 .5" stroke="#555" /></svg>
);

function LayoutTabs() {
  const navs = ['M3 3V13M11 3 5 8 11 13z', 'M10 3 4 8 10 13z', 'M5 3 11 8 5 13z', 'M12 3V13M4 3 10 8 4 13z'];
  return (
    <div className="flex h-4 shrink-0 border-t border-b border-t-[#808080] border-b-[#dcdcdc] pl-px font-['Liberation_Mono','Noto_Sans_CJK_SC',monospace] text-[10px] leading-[14px] text-black">
      {navs.map((d, i) => (
        <button key={i} type="button" aria-label={`标签 ${i + 1}`} className="flex w-3.5 items-center justify-center border-r border-[#a0a0a0]">
          <svg viewBox="0 0 16 16" className="h-3 w-3"><path d={d} fill="#666" stroke="#666" strokeWidth="1.200" /></svg>
        </button>
      ))}
      <button type="button" className="w-[51px] bg-black text-center text-white [clip-path:polygon(0_0,100%_0,calc(100%-6px)_100%,5px_100%)]">Model</button>
      <button type="button" className="-ml-1.5 flex"><Slash /><span className="w-[49px] text-center">Layout1</span></button>
      <button type="button" className="flex"><Slash /><span className="w-[49px] text-center">Layout2</span><Slash /></button>
    </div>
  );
}

function CommandWindow() {
  return (
    <section className="flex h-[72px] shrink-0 flex-col border-t border-white pt-[3px] pr-1">
      <div className="h-0.5 bg-[#808080]" />
      <div className="flex min-h-0 flex-1 pt-[9px] pr-2 pl-1">
        <VGrip />
        <div className="flex min-w-0 flex-1 flex-col border-t-2 border-l border-[#707070] bg-[#f0f0f0] font-['Liberation_Mono','Noto_Sans_CJK_SC',monospace] text-[13px] leading-4 text-black">
          <div className="flex h-[34px] border-b border-[#808080]">
            <div className="flex-1 bg-white pl-px">
              {[0, 1].map((i) => (
                <p key={i} className="h-4 whitespace-pre"><span className="text-base leading-4">命令</span>: '_.zoom _e</p>
              ))}
            </div>
            <div className="flex w-4 flex-col items-center justify-between border-l border-[#e2e2e2] py-1.5">
              <span className="rotate-180"><Caret c="#444" /></span>
              <Caret c="#444" />
            </div>
          </div>
          <div className="flex h-5">
            <label className="flex flex-1 items-center bg-white pl-px"><span className="text-base leading-4">命令</span>:<input aria-label="命令" className="ml-1 min-w-0 flex-1 bg-white outline-none" /></label>
            <div className="mr-[18px] flex w-[65px] items-center justify-between px-1.5">
              <span className="rotate-90"><Caret c="#333" /></span>
              <span className="mr-4 h-4 w-[15px] border border-[#9b9b9b] bg-[linear-gradient(90deg,#f5f5f5,#d4d4d4)]" />
              <span className="-rotate-90"><Caret c="#333" /></span>
            </div>
          </div>
        </div>
      </div>
    </section>
  );
}

function Dock() {
  return (
    <aside className="relative flex w-[95px] shrink-0 flex-col border-t border-l-2 border-t-[#a0a0a0] border-l-[#777] bg-[#f0f0f0]">
      <div className="flex h-[15px] shrink-0 items-center gap-1 pr-[5px] pl-2">
        <button type="button" aria-label="折叠" className="flex h-[9px] w-[9px] items-center justify-center rounded-xs border border-[#555]"><span className="h-0.5 w-[5px] bg-black" /></button>
        <span className="flex flex-1 flex-col gap-px"><i className={`h-[3px] ${gripBar}`} /><i className={`h-[3px] ${gripBar}`} /></span>
        <button type="button" aria-label="关闭面板" className="ml-1 flex h-[9px] w-[9px] items-center justify-center rounded-xs border border-[#555]">
          <svg viewBox="0 0 8 8" className="h-[7px] w-[7px]"><path d="M1 1 7 7M7 1 1 7" stroke="#000" strokeWidth="1.800" /></svg>
        </button>
      </div>
      <div className="flex min-h-0 flex-1 border-t-[3px] border-[#f5f8fc]">
        <div className="flex w-[25px] shrink-0 flex-col items-center pt-[21px] pl-px">
          <Group items={dockTools} />
          <button type="button" aria-label="删除" className="flex h-5 w-5 items-center justify-center bg-[#c6c6c6]"><Icon name="cross" /></button>
        </div>
        <div className="flex min-w-0 flex-1 flex-col pr-[7px] pb-1 text-xs text-black">
          <button type="button" className="-mr-1 mb-px h-[21px] shrink-0 border-2 border-t border-l border-[#0a0a9c] bg-white leading-[18px] text-[#0a0a9c]">坐标定位</button>
          <button type="button" className="h-5 shrink-0 border-r border-b border-black bg-[#f0f0f0] leading-[18px]">文字注记</button>
          <div className="flex min-h-0 flex-1 flex-col overflow-hidden bg-[#666f8e] pt-1 text-white">
            {notes.map((n) => (
              <a key={n} href="#" className="h-[26px] shrink-0 pl-[9px] leading-[26px]">{n}</a>
            ))}
          </div>
          {categories.map((c) => (
            <button key={c} type="button" className="h-[21px] shrink-0 border-t border-r border-b border-black bg-[#f0f0f0] leading-[19px]">{c}</button>
          ))}
        </div>
      </div>
      <div className="absolute top-[425px] right-0.5 flex h-[58px] w-2 flex-col justify-end rounded border border-[#8c909a] bg-[#333a44] p-px">
        <span className="h-[38px] bg-[repeating-linear-gradient(#3ccf6a_0_1px,#1c7a3a_1px_2px)]" />
      </div>
    </aside>
  );
}

function StatusBar() {
  return (
    <footer className="relative flex h-[23px] shrink-0 items-start border-t border-[#909090] bg-[#f0eeec] pl-[5px] font-['Liberation_Mono','Noto_Sans_CJK_SC',monospace] text-xs text-black">
      <div className="mt-1 h-[18px] w-[261px] border border-[#a0a0a0] pl-px text-[10px] leading-[17px] whitespace-pre">401302.8301, 4008817.6393, 0.0000</div>
      <div className="mt-1 ml-1 flex gap-1">
        {toggles.map(([t, on]) => (
          <button
            key={t}
            type="button"
            aria-pressed={on}
            className={`h-[19px] px-px leading-[18px] ${/^D/.test(t) ? 'text-[10px]' : 'text-xs'} ${on ? 'border-t border-r border-l border-t-black border-r-white border-l-black' : 'border-t border-r border-l border-t-white border-r-[#909090] border-l-white'}`}
          >
            {t}
          </button>
        ))}
      </div>
      <div className="mt-[3px] ml-auto flex h-5 items-center">
        <span className="text-xs">注释比例:</span>
        <label className="ml-2 flex items-center gap-1">
          <select aria-label="注释比例" className="w-[20px] appearance-none bg-transparent text-[10px] outline-none"><option>1:1</option></select>
          <Caret c="#000" />
        </label>
        <button type="button" aria-label="注释可见性" className="ml-2.5 h-4 w-4">
          <svg viewBox="0 0 16 16"><path d="M1 14 5.500 3 10 14M0 10H10M3 14H8" stroke="#1f5fa0" strokeWidth="1.800" fill="none" /><circle cx="11" cy="4" r="3.500" fill="#fde04a" /></svg>
        </button>
        <button type="button" aria-label="自动缩放" className="ml-2 h-4 w-4">
          <svg viewBox="0 0 16 16"><path d="M1 14 5.500 3 10 14M0 10H10" stroke="#909090" strokeWidth="1.800" fill="none" /><path d="M14 1 8 9" stroke="#808080" strokeWidth="3" /></svg>
        </button>
        <button type="button" aria-label="锁定" className="ml-1 flex h-5 w-6 items-center justify-center border-l border-[#a0a0a0]">
          <svg viewBox="0 0 16 16" className="h-4 w-4"><path d="M9 7V4Q9 1 12 1T15 4V7" fill="none" stroke="#8a7710" strokeWidth="2" /><path d="M9 7V4M15 4V7" stroke="#222" strokeDasharray="1 1" /><rect x="1" y="5.500" width="10" height="10" rx="1" fill="#e8cf1f" stroke="#222" /><path d="M1 8.500H4M8 8.500H11M1 11H4M8 11H11M1 13.500H4M8 13.500H11" stroke="#222" /></svg>
        </button>
        <button type="button" aria-label="状态栏菜单" className="mt-1 mr-2 ml-2"><Caret c="#000" /></button>
        <button type="button" aria-label="全屏" className="mr-1 h-4 w-4 border border-[#1f5fa0] bg-white p-px"><span className="block h-full border border-[#2f6fae] bg-[linear-gradient(135deg,#dbe9f7,#7fa9d3)]" /></button>
      </div>
      <span className="pointer-events-none absolute right-4 bottom-[6px] font-['Liberation_Sans','Noto_Sans_CJK_SC',sans-serif] text-[17px] leading-6 whitespace-nowrap text-[#808080]/70">CSDN @刘一哥GIS</span>
    </footer>
  );
}

export default function App() {
  return (
    <div className="flex h-screen flex-col overflow-hidden bg-[#f0f0f0] font-['Noto_Sans','Noto_Sans_CJK_SC',sans-serif]">
      <TitleBar />
      <MenuBar />
      <Toolbars />
      <main className="flex min-h-0 flex-1">
        <div className="flex min-w-0 flex-1 flex-col">
          <div className="flex min-h-0 flex-1">
            <LeftTools />
            <div className="flex min-w-0 flex-1 flex-col border-l-2 border-[#808080]">
              <Drawing />
              <LayoutTabs />
            </div>
            <div className="ml-0.5 flex w-[26px] shrink-0 flex-col items-center self-start border-r border-b border-[#a0a0a0] pb-[5px]">
              <HGrip />
              <Group items={modifyTools} />
            </div>
            <span className="w-1 shrink-0" />
          </div>
          <CommandWindow />
        </div>
        <Dock />
      </main>
      <StatusBar />
    </div>
  );
}
